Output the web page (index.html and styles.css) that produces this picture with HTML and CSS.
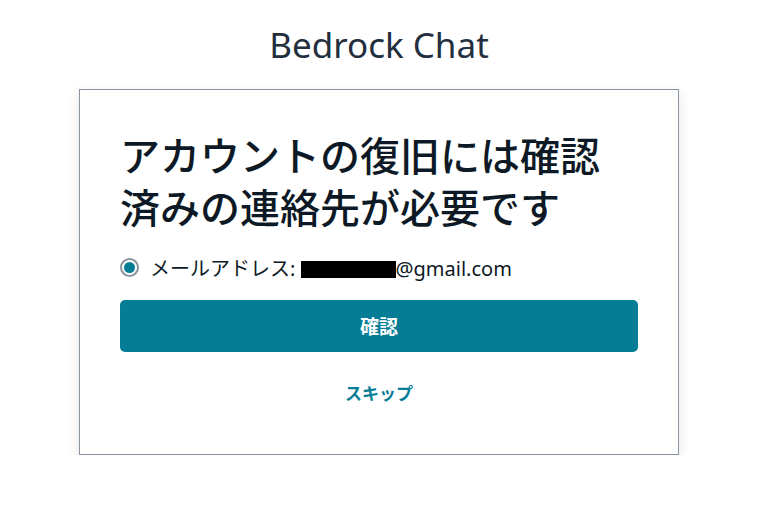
FILE: index.html
```html
<!DOCTYPE html>
<html lang="ja">
<head>
<meta charset="utf-8">
<title>Bedrock Chat</title>
<link rel="stylesheet" href="styles.css">
</head>
<body>
<main class="page">
  <h1 class="brand">Bedrock Chat</h1>
  <section class="card">
    <h2 class="heading">アカウントの復旧には確認済みの連絡先が必要です</h2>
    <label class="radio-row">
      <span class="radio"><span class="radio-dot"></span></span>
      <span class="radio-label">メールアドレス: <span class="redact"></span>@gmail.com</span>
    </label>
    <button class="btn-primary" type="button">確認</button>
    <button class="btn-link" type="button">スキップ</button>
  </section>
</main>
</body>
</html>
```
FILE: styles.css
```css
* { box-sizing: border-box; }
html, body { margin: 0; padding: 0; background: #ffffff; }
body {
  font-family: "Noto Sans", "Noto Sans CJK JP", sans-serif;
  color: #0d1a26;
}
.page {
  display: flex;
  flex-direction: column;
  align-items: center;
  padding-top: 21px;
  padding-right: 5px;
}
.brand {
  margin: 0;
  font-weight: 400;
  font-size: 35px;
  line-height: 48px;
  color: #232f3e;
}
.card {
  margin-top: 20px;
  width: 600px;
  border: 1px solid #89949f;
  background: #fff;
  box-shadow: 0 4px 12px rgba(0, 0, 0, 0.1);
  padding: 40px;
  display: flex;
  flex-direction: column;
  gap: 18px;
}
.heading {
  margin: 0;
  font-size: 40px;
  line-height: 52px;
  font-weight: 500;
  width: 490px;
  color: #0d1a26;
}
.radio-row {
  display: flex;
  align-items: center;
  gap: 11px;
  height: 30px;
  font-size: 20px;
  color: #0d1a26;
}
.radio {
  width: 19px;
  height: 19px;
  border-radius: 50%;
  border: 2px solid #89949f;
  display: flex;
  align-items: center;
  justify-content: center;
  flex: none;
}
.radio-dot {
  width: 11px;
  height: 11px;
  border-radius: 50%;
  background: #047d95;
}
.redact {
  display: inline-block;
  width: 95px;
  height: 17px;
  background: #000;
  vertical-align: -2px;
}
.btn-primary {
  height: 52px;
  border: none;
  border-radius: 5px;
  background: #047d95;
  color: #fff;
  font-family: inherit;
  font-size: 19px;
  font-weight: 700;
}
.btn-link {
  height: 44px;
  border: none;
  background: transparent;
  color: #047d95;
  font-family: inherit;
  font-size: 17px;
  font-weight: 700;
}
```
